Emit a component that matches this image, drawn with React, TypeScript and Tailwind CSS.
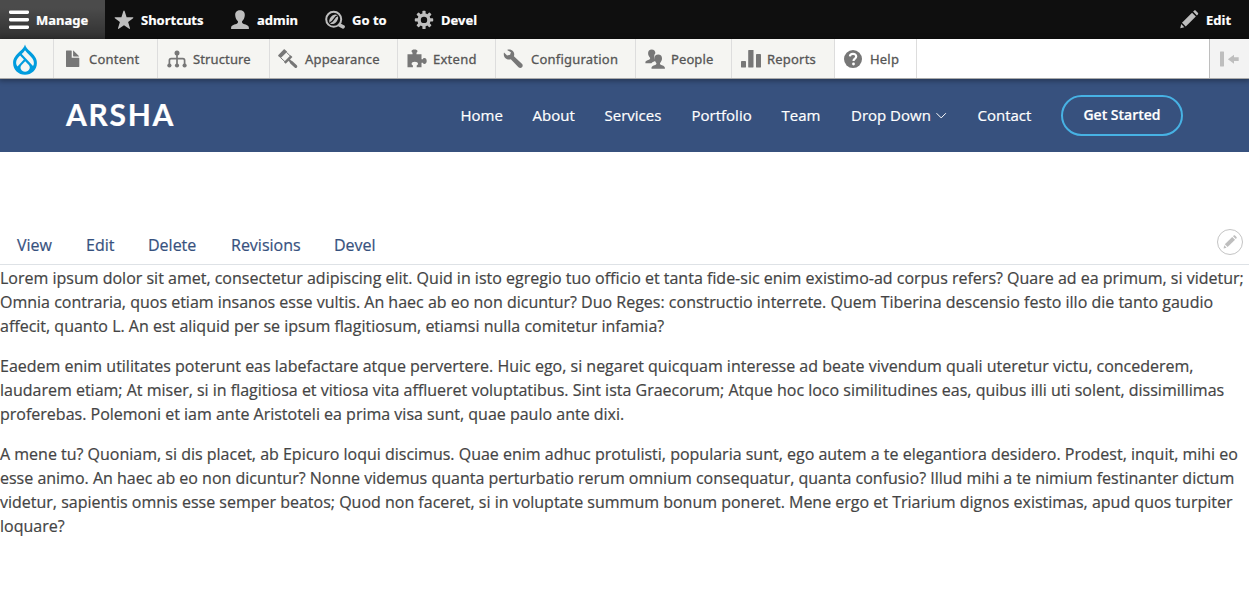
import type { ReactNode } from "react";

const Icon = ({ children, className = "" }: { children: ReactNode; className?: string }) => (
  <svg viewBox="0 0 20 20" fill="currentColor" className={"h-5 w-5 shrink-0 " + className}>
    {children}
  </svg>
);

const HamburgerIcon = () => (
  <Icon className="text-white">
    <rect x="0" y="0.4" width="20" height="3.6" rx="1.4" />
    <rect x="0" y="7.9" width="20" height="3.6" rx="1.4" />
    <rect x="0" y="15.4" width="20" height="3.6" rx="1.4" />
  </Icon>
);
const StarIcon = () => (
  <Icon>
    <path d="M10 .4c.3 0 .5.3.7.8l1.900 6 6.200.1c.6 0 .7.5.3.9l-5 3.900 1.900 6.100c.2.6-.3.9-.8.6L10 15.200l-5.200 3.600c-.5.3-1 0-.8-.6l1.900-6.100-5-3.900c-.4-.4-.3-.9.3-.9l6.200-.1 1.900-6c.2-.5.4-.8.7-.8z" />
  </Icon>
);
const PersonIcon = () => (
  <Icon>
    <path d="M10 .3c2.900 0 4.900 1.900 4.800 4.900-.1 2.600-1.300 4.600-2.500 5.900-.6.700-.3 2 .6 2.500 2 1.100 6 1.500 6 4.200v1.200H1.100v-1.200c0-2.700 4-3.100 6-4.200.9-.5 1.200-1.800.6-2.500-1.200-1.300-2.400-3.300-2.500-5.900C5.100 2.200 7.100.3 10 .3z" />
  </Icon>
);
const GoToIcon = () => (
  <Icon>
    <circle cx="8.700" cy="9.300" r="7.500" fill="none" stroke="currentColor" strokeWidth="2" />
    <path d="M14.800 15.200l3.300 1.600" stroke="currentColor" strokeWidth="3.600" strokeLinecap="round" />
    <g transform="rotate(40 8.700 9.300)">
      <ellipse cx="8.700" cy="9.300" rx="3.700" ry="5.400" />
      <path d="M9.500 4.200C7 7.500 10.600 9.800 8 14.400" fill="none" stroke="#0f0f0f" strokeWidth="1.200" />
    </g>
  </Icon>
);
const GearIcon = () => (
  <Icon>
    <g transform="translate(10 9.900)">
      {[0, 45, 90, 135].map((a) => (
        <rect key={a} x="-1.600" y="-9.200" width="3.200" height="18.400" rx=".7" transform={`rotate(${a})`} />
      ))}
      <circle r="6.600" />
      <circle r="3.200" fill="#0f0f0f" />
    </g>
  </Icon>
);
const PencilShape = () => (
  <>
    <path d="M14.300 1.700l1-1c.6-.6 1.300-.6 1.900 0l2.100 2.100c.6.6.6 1.300 0 1.900l-1 1z" />
    <path d="M13.200 2.800l4 4L6.600 17.300l-4-4z" />
    <path d="M1.800 14.800l3.300 3.300L.8 19.200z" />
  </>
);

const FileIcon = () => (
  <Icon>
    <path d="M3.500 1.600h4.700c.3 0 .5.200.5.500v6.700h7.100c.3 0 .5.200.5.500v8.200c0 .3-.2.500-.5.500H3.500c-.3 0-.5-.2-.5-.5V2.100c0-.3.200-.5.500-.5zM10.100 1.900c0-.4.300-.4.500-.2l5.300 5.200c.2.200.2.500-.2.500h-5.100c-.3 0-.5-.2-.5-.5z" />
  </Icon>
);
const StructureIcon = () => (
  <Icon>
    <circle cx="10" cy="4" r="2.500" />
    <path d="M10 4v12M2.400 16v-4.600c0-1.100.6-1.700 1.700-1.700h11.800c1.100 0 1.700.6 1.700 1.700V16" fill="none" stroke="currentColor" strokeWidth="1.700" />
    <circle cx="2.400" cy="16.500" r="2.100" />
    <circle cx="10" cy="16.500" r="2.100" />
    <circle cx="17.600" cy="16.500" r="2.100" />
  </Icon>
);
const AppearanceIcon = () => (
  <Icon className="-translate-x-px">
    <path d="M6.800.4l2.400 2.300-6.400 6.400L.4 7.200c-.4-.4-.4-.8 0-1.200L5.700.5c.4-.4.7-.4 1.100-.1z" />
    <path d="M8.400 3.200l4.500 4.400-5.500 5.500-4.900-4.500" fill="none" stroke="currentColor" strokeWidth="1" />
    <path d="M13.400 13.400l4.300 4" stroke="currentColor" strokeWidth="3.200" strokeLinecap="round" />
    <path d="M9.800 9.800l3.600 3.400" stroke="currentColor" strokeWidth="2.200" />
    <path d="M6.800 13.800l6.700-6.700" stroke="currentColor" strokeWidth="2.600" />
  </Icon>
);
const ExtendIcon = () => (
  <Icon>
    <path d="M.5 5.200h5V3.700c-.7-.4-1-.9-1-1.600C4.500 1 5.700.4 7.500.4s3 .6 3 1.700c0 .7-.3 1.200-1 1.600v1.500h5v5h1.300c.4-.8.9-1.100 1.600-1.100 1.400 0 2.300 1.200 2.300 2.900s-.9 2.900-2.300 2.900c-.7 0-1.200-.4-1.600-1.200h-1.300v4.600H9.700v-1.800c.9-.4 1.300-1 1.300-1.700 0-1.300-1.300-2.100-3.200-2.100s-3.200.8-3.200 2.100c0 .7.4 1.300 1.300 1.700v1.800H.5z" />
  </Icon>
);
const WrenchIcon = () => (
  <Icon className="-translate-x-0.5">
    <path d="M4.100.9c2.200-.8 4.600-.2 6 1.400 1.300 1.500 1.400 3.200.8 5l8 7.500c1.100 1.100 1 2.500.1 3.500-1 1-2.400 1.100-3.500 0l-7.700-8c-2 .6-3.900.3-5.300-1C1 7.800.4 5.700 1 3.500l3.100 3 3-.8.8-2.400z" />
  </Icon>
);
const PeopleIcon = () => (
  <Icon>
    <path d="M6.700.6c2.300 0 3.700 1.500 3.700 3.700-.9 1-1.300 2.300-1.100 4 .1 1.300.5 2.500 1.200 3.500-1 .8-2.900 1-4.100 2.500H.4v-.9c0-2 2.700-2.200 4-3 .8-.5 1-1.200.4-1.900C3.800 7.400 3.100 6 3.100 4.300 3 2.100 4.500.6 6.700.6z" />
    <path d="M13.200 5.600c2.400 0 3.900 1.600 3.800 3.900 0 1.700-.8 3.200-1.700 4.200-.6.700-.4 1.600.4 2 1.400.8 4.200 1.100 4.200 3.300v.8H6.500V19c0-2.200 2.800-2.500 4.200-3.300.8-.4 1-1.300.4-2-.9-1-1.700-2.500-1.700-4.200-.1-2.300 1.400-3.900 3.800-3.900z" />
  </Icon>
);
const ReportsIcon = () => (
  <Icon>
    <rect x="0" y="12" width="5" height="6.500" rx=".4" />
    <rect x="7.200" y="1" width="5.300" height="17.500" rx=".4" />
    <rect x="15" y="5" width="5" height="13.500" rx=".4" />
  </Icon>
);
const HelpIcon = () => (
  <Icon className="-translate-x-px">
    <circle cx="10" cy="10.100" r="9" />
    <path d="M6.900 7.400C7 5.700 8.200 4.900 10 4.900c1.900 0 3.200.9 3.200 2.500 0 2.300-2.700 2.200-2.700 4.700" fill="none" stroke="#fff" strokeWidth="2.200" />
    <circle cx="10.500" cy="15" r="1.400" fill="#fff" />
  </Icon>
);

const DrupalDrop = () => (
  <svg viewBox="0 0 24 31" className="h-[31px] w-6">
    <path d="M12 .4c.7 2.700 2.800 4.700 5.300 7.200 3.500 3.300 6.600 6.600 6.600 11.300C23.900 25.500 18.600 30.700 12 30.700S.1 25.500.1 18.900c0-4.700 3.100-8 6.600-11.300C9.200 5.100 11.300 3.100 12 .4z" fill="#009cde" />
    <g fill="#f5f5f2">
      <path d="M12 6.200c1.200 1.700 2.800 3.100 4.300 4.700 2.600 2.600 4.600 4.900 4.600 8 0 1.200-.3 2.300-.9 3.200L8.700 9.900c1.300-1.200 2.500-2.400 3.300-3.700z" />
      <path d="M7.100 11.500l3.800 4-6.400 6.900C3.500 20.900 3.100 19.900 3.100 18.700c0-2.700 1.700-4.900 4-7.200z" />
      <path d="M12.200 17.200l3.600 3.800c2.300 2.700.2 6.700-3.700 6.700s-6-4-3.500-6.700z" />
    </g>
  </svg>
);

const tray = [
  { label: "Content", icon: <FileIcon />, cls: "w-[104px] bg-[#f5f5f2]", text: "tracking-[0.22px]" },
  { label: "Structure", icon: <StructureIcon />, cls: "w-[112px] bg-[#f5f5f2]", text: "tracking-[0.13px]" },
  { label: "Appearance", icon: <AppearanceIcon />, cls: "w-[128px] bg-[#f5f5f2]", text: "tracking-[0.18px]" },
  { label: "Extend", icon: <ExtendIcon />, cls: "w-[98px] bg-[#f5f5f2]", text: "tracking-[0.25px]" },
  { label: "Configuration", icon: <WrenchIcon />, cls: "w-[140px] bg-[#f5f5f2]", text: "tracking-[0.22px]" },
  { label: "People", icon: <PeopleIcon />, cls: "w-[96px] bg-[#f5f5f2]", text: "tracking-[0.1px]" },
  { label: "Reports", icon: <ReportsIcon />, cls: "w-[103px] bg-[#f5f5f2]", text: "tracking-[0.2px]" },
  { label: "Help", icon: <HelpIcon />, cls: "w-[82px] bg-white", text: "tracking-[0.2px]" },
];

const bar = [
  { label: "Shortcuts", icon: <StarIcon />, cls: "w-[116px]" },
  { label: "admin", icon: <PersonIcon />, cls: "w-[95px]" },
  { label: "Go to", icon: <GoToIcon />, cls: "w-[89px]" },
  { label: "Devel", icon: <GearIcon />, cls: "w-[90px]" },
];

const nav = [
  { label: "Home", cls: "w-[72px]" },
  { label: "About", cls: "w-[72px]" },
  { label: "Services", cls: "w-[87px]" },
  { label: "Portfolio", cls: "w-[90px]" },
  { label: "Team", cls: "w-[69.500px]" },
];

const paragraphs = [
  [
    "Lorem ipsum dolor sit amet, consectetur adipiscing elit. Quid in isto egregio tuo officio et tanta fide-sic enim existimo-ad corpus refers? Quare ad ea primum, si videtur;",
    "Omnia contraria, quos etiam insanos esse vultis. An haec ab eo non dicuntur? Duo Reges: constructio interrete. Quem Tiberina descensio festo illo die tanto gaudio",
    "affecit, quanto L. An est aliquid per se ipsum flagitiosum, etiamsi nulla comitetur infamia?",
  ],
  [
    "Eaedem enim utilitates poterunt eas labefactare atque pervertere. Huic ego, si negaret quicquam interesse ad beate vivendum quali uteretur victu, concederem,",
    "laudarem etiam; At miser, si in flagitiosa et vitiosa vita afflueret voluptatibus. Sint ista Graecorum; Atque hoc loco similitudines eas, quibus illi uti solent, dissimillimas",
    "proferebas. Polemoni et iam ante Aristoteli ea prima visa sunt, quae paulo ante dixi.",
  ],
  [
    "A mene tu? Quoniam, si dis placet, ab Epicuro loqui discimus. Quae enim adhuc protulisti, popularia sunt, ego autem a te elegantiora desidero. Prodest, inquit, mihi eo",
    "esse animo. An haec ab eo non dicuntur? Nonne videmus quanta perturbatio rerum omnium consequatur, quanta confusio? Illud mihi a te nimium festinanter dictum",
    "videtur, sapientis omnis esse semper beatos; Quod non faceret, si in voluptate summum bonum poneret. Mene ergo et Triarium dignos existimas, apud quos turpiter",
    "loquare?",
  ],
];

export default function App() {
  return (
    <div className="h-[593px] w-[1249px] overflow-hidden bg-white font-['Open_Sans',sans-serif] text-[#444444] [-webkit-text-stroke:0.2px]">
      <nav className="flex h-[39px] bg-[#0f0f0f] font-['Noto_Sans',sans-serif] text-[13px] font-bold text-white">
        <a className="flex w-[105px] items-center gap-[7px] bg-[linear-gradient(rgba(255,255,255,0.25)_20%,transparent_200%)] pl-[9px]">
          <HamburgerIcon />
          <span className="pt-0.5">Manage</span>
        </a>
        {bar.map((b) => (
          <a key={b.label} className={"flex items-center gap-[7px] pl-[9px] text-[#bebebe] " + b.cls}>
            {b.icon}
            <span className="pt-0.5 whitespace-nowrap text-white">{b.label}</span>
          </a>
        ))}
        <a className="ml-auto flex w-[70px] items-center gap-[7px] text-[#bebebe]">
          <Icon className="h-[19px]"><PencilShape /></Icon>
          <span className="pt-0.5 text-white">Edit</span>
        </a>
      </nav>

      <div className="relative flex h-10 border-b border-[#aaaaaa] bg-white font-['Noto_Sans',sans-serif] text-[13px] text-[#565656] shadow-[0_1px_5px_1px_rgba(0,0,0,0.33)]">
        <a className="flex w-[53px] items-center bg-[#f5f5f2] pt-px pl-[13px]">
          <DrupalDrop />
        </a>
        {tray.map((t) => (
          <a key={t.label} className={"flex items-center gap-[6px] border-l border-[#dddddd] pl-[9px] text-[#777777] " + t.cls}>
            {t.icon}
            <span className={"pt-0.5 whitespace-nowrap text-[#565656] [-webkit-text-stroke:0.3px] " + t.text}>{t.label}</span>
          </a>
        ))}
        <div className="w-px bg-[#dddddd]" />
        <button className="ml-auto flex w-10 items-center justify-center border-l border-[#bebebe] bg-[#f3f3f3] text-[#bebebe]">
          <Icon className="-translate-x-px">
            <rect x="1" y="2.500" width="4" height="15" rx=".4" />
            <path d="M15 5.800v2.500h4.700v3.800H15v2.600L8.900 10.200z" />
          </Icon>
        </button>
      </div>

      <header className="flex h-[73px] items-center bg-[#37517e] pl-[66px] text-white">
        <h1 className="w-[394.500px] pb-1 font-['Lato',sans-serif] text-[30px] leading-none font-bold tracking-[1.7px]">ARSHA</h1>
        <div className="flex items-center text-[15px] font-medium whitespace-nowrap">
          {nav.map((n) => (
            <a key={n.label} className={n.cls}>{n.label}</a>
          ))}
          <a className="flex w-[126.500px] items-center gap-1">
            Drop Down
            <svg viewBox="0 0 12 12" className="h-3 w-3" fill="none" stroke="currentColor">
              <path d="M1.500 3.200L6.200 7.900l4.700-4.700" />
            </svg>
          </a>
          <a className="w-[83.500px]">Contact</a>
          <a className="flex h-[41px] w-[122px] items-center justify-center rounded-full border-2 border-[#47b2e4] pb-0.5 text-[14px] font-semibold">
            Get Started
          </a>
        </div>
      </header>

      <main className="pt-[74px]">
        <div className="flex h-[39px] items-center border-b border-[#dee2e6] pl-[17px] text-[16px] leading-6 text-[#37517e]">
          <a className="w-[69px]">View</a>
          <a className="w-[62px]">Edit</a>
          <a className="w-[83px]">Delete</a>
          <a className="w-[103px]">Revisions</a>
          <a>Devel</a>
          <button className="mr-[6px] mb-[7px] ml-auto flex h-[26px] w-[26px] items-center justify-center rounded-full border border-[#c4c4c4] text-[#bebebe]">
            <svg viewBox="0 0 20 20" fill="currentColor" className="h-[14px] w-[14px]">
              <PencilShape />
            </svg>
          </button>
        </div>
        <div className="flex flex-col gap-4 pt-px text-[16px] leading-6 whitespace-nowrap">
          {paragraphs.map((lines) => (
            <p key={lines[0]}>
              {lines.map((line) => (
                <span key={line} className="block">{line}</span>
              ))}
            </p>
          ))}
        </div>
      </main>
    </div>
  );
}
